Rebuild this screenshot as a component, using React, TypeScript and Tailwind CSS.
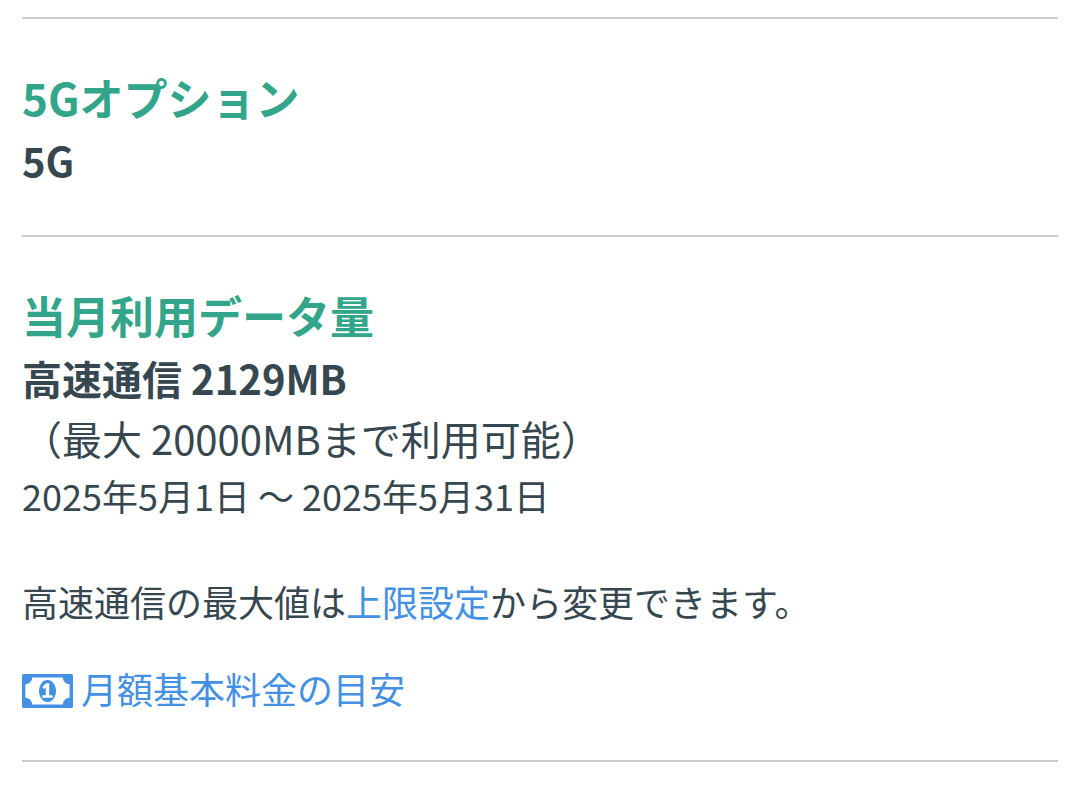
function BanknoteIcon() {
  return (
    <svg viewBox="0 256 1920 1280" className="mb-[7px] h-[34px] w-[51px] shrink-0" fill="currentColor" aria-hidden="true">
      <path d="M768 1152h384v-96h-128v-448h-114l-148 137 77 80q42-37 55-57h2v288h-128v96zm512-256q0 70-21 142t-59.5 134-101.5 101-138 39-138-39-101.5-101-59.5-134-21-142 21-142 59.5-134 101.5-101 138-39 138 39 101.5 101 59.5 134 21 142zm512 256v-512q-106 0-181-75t-75-181h-1152q0 106-75 181t-181 75v512q106 0 181 75t75 181h1152q0-106 75-181t181-75zm128-832v1152q0 26-19 45t-45 19h-1792q-26 0-45-19t-19-45v-1152q0-26 19-45t45-19h1792q26 0 45 19t19 45z" />
    </svg>
  );
}

export default function App() {
  return (
    <main className="min-h-screen bg-white px-[22px] pt-[17px] text-[#37474f] font-['Noto_Sans_CJK_JP',sans-serif]">
      <section className="border-t-2 border-[#cccccc] pt-[45px] pb-[45px]">
        <h2 className="text-[44px] leading-[66px] font-bold text-[#33a58a]">5Gオプション</h2>
        <p className="text-[40px] leading-[60px] font-bold">5G</p>
      </section>
      <section className="border-y-2 border-[#cccccc] pt-[45px] pb-[45px]">
        <h2 className="text-[44px] leading-[66px] font-bold text-[#33a58a]">当月利用データ量</h2>
        <p className="text-[40px] leading-[60px] font-bold">高速通信 2129MB</p>
        <p className="text-[40px] leading-[60px]">（最大 20000MBまで利用可能）</p>
        <p className="text-[36px] leading-[54px]">2025年5月1日 〜 2025年5月31日</p>
        <p className="mt-[52px] text-[36px] leading-[54px]">
          高速通信の最大値は<a href="#limit" className="text-[#4490e2]">上限設定</a>から変更できます。
        </p>
        <a href="#fee" className="mt-[33px] flex w-fit items-end gap-2 text-[36px] leading-[54px] text-[#4490e2]">
          <BanknoteIcon />
          月額基本料金の目安
        </a>
      </section>
    </main>
  );
}
